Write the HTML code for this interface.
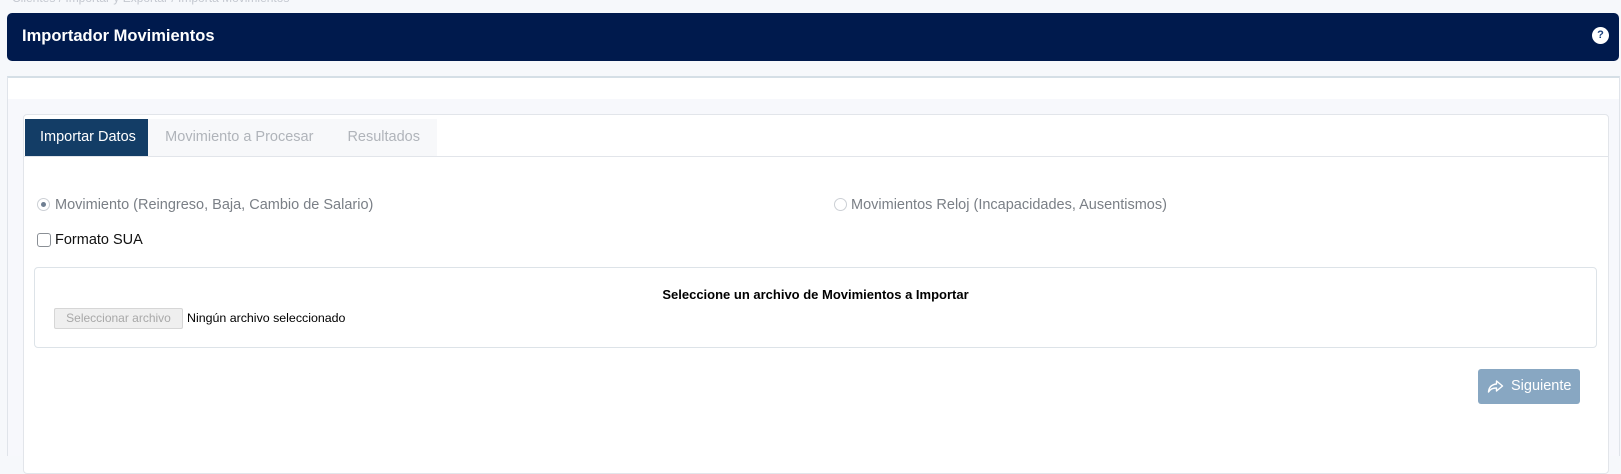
<!DOCTYPE html>
<html><head><meta charset="utf-8">
<style>
*{box-sizing:border-box;margin:0;padding:0}
body{width:1621px;height:451px;overflow:hidden;background:#f6f8fb;font-family:"Liberation Sans",Arial,sans-serif;position:relative}
.a{position:absolute}
.bc{left:12px;top:-9px;font-size:12px;color:#c4c8d0;white-space:nowrap}
.hdr{left:7px;top:13px;width:1612px;height:48px;background:#001a4d;border-radius:5px}
.hdr h1{position:absolute;left:15px;top:14px;font-size:16.5px;color:#fff;font-weight:bold;white-space:nowrap}
.help{position:absolute;left:1585px;top:14px;width:17px;height:17px;border-radius:50%;background:#fff;color:#1a3f7a;font-size:11px;font-weight:bold;text-align:center;line-height:17px}
.card{left:7px;top:76px;width:1613px;height:380px;background:#f7f8fc;border-top:2px solid #d5dfe6;border-left:1px solid #e0e4ea;border-right:1px solid #e0e4ea}
.cardtop{left:0;top:0;right:0;height:21px;background:#fff}
.panel{left:23px;top:114px;width:1586px;height:360px;background:#fff;border:1px solid #e2e5ea;border-radius:4px}
.tabs{left:25px;top:119px;height:37px;width:412px;background:#f7f8fa;display:flex}
.tab{font-size:14.5px;color:#b0b4ba;line-height:37px;padding:0 17px;white-space:nowrap}
.tab.act{background:#133d66;color:#fff;width:126px;padding:0 0 0 15px}
.tabline{left:24px;width:1584px;top:156px;border-top:1px solid #e2e5ea}
.lbl{font-size:14.5px;color:#7a7f86;white-space:nowrap}
.radio{width:13px;height:13px;border-radius:50%;border:1px solid #ccd0d5;background:#fff}
.radio.on::after{content:"";position:absolute;left:3px;top:3px;width:5px;height:5px;border-radius:50%;background:#6f7f92}
.chk{width:14px;height:14px;border:1px solid #8a8f95;border-radius:3px;background:#fff}
.filebox{left:34px;top:267px;width:1563px;height:81px;border:1px solid #dde3e8;border-radius:4px}
.ft{left:34px;width:1563px;top:287px;text-align:center;font-size:13px;font-weight:bold;color:#000}
.fbtn{left:54px;top:308px;width:129px;height:21px;border:1px solid #d6d6d6;background:#efefef;color:#a8a8a8;font-size:12px;line-height:19px;text-align:center;border-radius:2px}
.ftxt{left:187px;top:311px;font-size:12.4px;color:#000;white-space:nowrap}
.btn{left:1478px;top:369px;width:102px;height:35px;background:#88a7c2;border-radius:3px;color:#fff;font-size:14.5px;line-height:35px;padding-left:33px}
.btn svg{position:absolute;left:9px;top:11px}
</style></head><body>
<div class="a bc">Clientes / Importar y Exportar / Importa Movimientos</div>
<div class="a hdr"><h1>Importador Movimientos</h1><div class="help">?</div></div>
<div class="a card"><div class="a cardtop"></div></div>
<div class="a panel"></div>
<div class="a tabs"><div class="tab act">Importar Datos</div><div class="tab">Movimiento a Procesar</div><div class="tab">Resultados</div></div>
<div class="a tabline"></div>
<div class="a radio on" style="left:37px;top:198px"></div>
<div class="a lbl" style="left:55px;top:197px">Movimiento (Reingreso, Baja, Cambio de Salario)</div>
<div class="a radio" style="left:834px;top:198px"></div>
<div class="a lbl" style="left:851px;top:197px">Movimientos Reloj (Incapacidades, Ausentismos)</div>
<div class="a chk" style="left:37px;top:233px"></div>
<div class="a lbl" style="left:55px;top:232px;color:#111">Formato SUA</div>
<div class="a filebox"></div>
<div class="a ft">Seleccione un archivo de Movimientos a Importar</div>
<div class="a fbtn">Seleccionar archivo</div>
<div class="a ftxt">Ningún archivo seleccionado</div>
<div class="a btn"><svg width="17" height="14" viewBox="0 0 16 14"><path d="M9 1 L15 6 L9 11 L9 8 C5 8 3 9 1 12 C1.5 7 4 4.5 9 4 Z" fill="none" stroke="#fff" stroke-width="1.4" stroke-linejoin="round"/></svg>Siguiente</div>
</body></html>
